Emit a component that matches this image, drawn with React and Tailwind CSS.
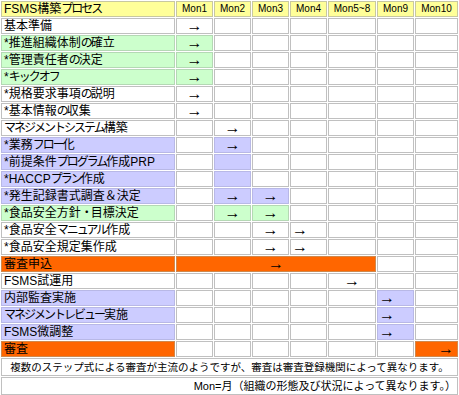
const tone = {
  w: 'bg-white border-[#c0c0c0]',
  g: 'bg-[#ccffcc] border-[#b4d8b4]',
  p: 'bg-[#ccccff] border-[#b8b8e6]',
  o: 'bg-[#ff6600] border-[#d0884c]',
  y: 'bg-[#ffff99] border-[#c8c8a0]',
};

const align = { c: 'text-center', l: 'text-left pl-px', r: 'text-right pr-[3px]' };

const months = ['Mon1', 'Mon2', 'Mon3', 'Mon4', 'Mon5~8', 'Mon9', 'Mon10'];

// each row: label, label colour, and the month cells that are not plain white
const rows = [
  { label: '基本準備', bg: 'w', cells: { 0: ['w', 'c'] } },
  { label: '*推進組織体制の確立', bg: 'g', cells: { 0: ['g', 'c'] } },
  { label: '*管理責任者の決定', bg: 'g', cells: { 0: ['g', 'c'] } },
  { label: '*キックオフ', bg: 'g', cells: { 0: ['g', 'c'] } },
  { label: '*規格要求事項の説明', bg: 'w', cells: { 0: ['w', 'c'] } },
  { label: '*基本情報の収集', bg: 'w', cells: { 0: ['w', 'c'] } },
  { label: 'マネジメントシステム構築', bg: 'w', cells: { 1: ['w', 'c'] } },
  { label: '*業務フロー化', bg: 'p', cells: { 1: ['p', 'c'] } },
  { label: '*前提条件プログラム作成PRP', bg: 'p', cells: { 1: ['p'] } },
  { label: '*HACCPプラン作成', bg: 'p', cells: { 1: ['p'] } },
  { label: '*発生記録書式調査＆決定', bg: 'p', cells: { 1: ['p', 'c'], 2: ['p', 'c'] } },
  { label: '*食品安全方針・目標決定', bg: 'g', cells: { 1: ['g', 'c'], 2: ['g', 'c'] } },
  { label: '*食品安全マニュアル作成', bg: 'w', cells: { 2: ['w', 'c'], 3: ['w', 'l'] } },
  { label: '*食品安全規定集作成', bg: 'w', cells: { 2: ['w', 'c'], 3: ['w', 'l'] } },
  { label: '審査申込', bg: 'o', span: true },
  { label: 'FSMS試運用', bg: 'w', cells: { 4: ['w', 'c'] } },
  { label: '内部監査実施', bg: 'p', cells: { 5: ['p', 'l'] } },
  { label: 'マネジメントレビュー実施', bg: 'p', cells: { 5: ['p', 'l'] } },
  { label: 'FSMS微調整', bg: 'p', cells: { 5: ['p', 'l'] } },
  { label: '審査', bg: 'o', cells: { 6: ['o', 'r'] } },
];

const td = 'border p-0 leading-[14px] whitespace-nowrap';

// kana in the original font are narrower than kanji, so tighten them
const Label = ({ text }) => (
  <>
    {text.split(/([\u3040-\u30ff]+)/).map((part, i) =>
      /[\u3040-\u30ff]/.test(part)
        ? <span key={i} className="tracking-[-2px]">{part}</span>
        : part
    )}
  </>
);

const MonthCell = ({ spec }) => {
  const [bg, dir] = spec || ['w'];
  return (
    <td className={`${td} ${tone[bg]} ${dir ? align[dir] : ''}`}>
      {dir ? '→' : ''}
    </td>
  );
};

const Row = ({ row }) => {
  return (
    <tr className="h-[16px]">
      <td className={`${td} ${tone[row.bg]} pl-[2px] text-[12px]`}><Label text={row.label} /></td>
      {row.span ? (
        <>
          <td colSpan={5} className={`${td} ${tone.o} text-center`}>→</td>
          <MonthCell />
          <MonthCell />
        </>
      ) : (
        months.map((m, i) => <MonthCell key={m} spec={row.cells[i]} />)
      )}
    </tr>
  );
};

export default function App() {
  return (
    <div className="w-[459px] h-[395px] bg-white text-black overflow-hidden font-['Liberation_Sans','Noto_Sans_CJK_JP',sans-serif]">
      <table className="table-fixed border-separate border-spacing-px w-[459px]">
        <colgroup>
          <col className="w-[174px]" />
          <col className="w-[37px]" />
          <col className="w-[37px]" />
          <col className="w-[37px]" />
          <col className="w-[37px]" />
          <col className="w-[48px]" />
          <col className="w-[37px]" />
          <col className="w-[43px]" />
        </colgroup>
        <tbody>
          <tr className="h-[16px]">
            <td className={`${td} ${tone.y} pl-[2px] text-[12px]`}><Label text="FSMS構築プロセス" /></td>
            {months.map(m => (
              <td key={m} className={`${td} ${tone.y} text-center text-[10px]`}>{m}</td>
            ))}
          </tr>
          {rows.map(row => <Row key={row.label} row={row} />)}
          <tr className="h-[18px]">
            <td colSpan={8} className={`${td} ${tone.w} text-center text-[10.5px]`}>
              複数のステップ式による審査が主流のようですが、審査は審査登録機関によって異なります。
            </td>
          </tr>
          <tr className="h-[18px]">
            <td colSpan={8} className={`${td} ${tone.w} text-right pr-px text-[11px]`}>
              Mon=月（組織の形態及び状況によって異なります。）
            </td>
          </tr>
        </tbody>
      </table>
    </div>
  );
}
